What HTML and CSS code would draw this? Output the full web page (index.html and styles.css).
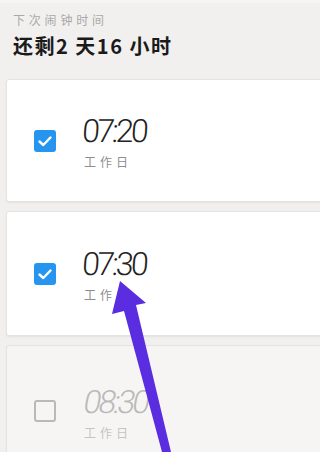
FILE: index.html
```html
<!DOCTYPE html>
<html lang="zh">
<head>
<meta charset="utf-8">
<link rel="stylesheet" href="styles.css">
</head>
<body>
<div class="page">
  <header class="head">
    <div class="label">下次闹钟时间</div>
    <div class="remain">还剩2 天16 小时</div>
  </header>
  <div class="list">
    <div class="card">
      <span class="check on"><svg viewBox="0 0 22 22" width="22" height="22"><path d="M5.5 11.5 L9.3 15 L16.5 7.5" fill="none" stroke="#fff" stroke-width="2.4" stroke-linecap="round" stroke-linejoin="round"/></svg></span>
      <div class="info">
        <div class="time">07:20</div>
        <div class="days">工作日</div>
      </div>
    </div>
    <div class="card">
      <span class="check on"><svg viewBox="0 0 22 22" width="22" height="22"><path d="M5.5 11.5 L9.3 15 L16.5 7.5" fill="none" stroke="#fff" stroke-width="2.4" stroke-linecap="round" stroke-linejoin="round"/></svg></span>
      <div class="info">
        <div class="time">07:30</div>
        <div class="days">工作日</div>
      </div>
    </div>
    <div class="card off">
      <span class="check"></span>
      <div class="info">
        <div class="time">08:30</div>
        <div class="days">工作日</div>
      </div>
    </div>
  </div>
  <svg class="arrow" viewBox="0 0 320 452" width="320" height="452">
    <polygon points="120,281 146,303 136,305 171,452 162,452 124,311 112,314" fill="#5a2ee0"/>
  </svg>
</div>
</body>
</html>
```
FILE: styles.css
```css
html, body {
  margin: 0;
  padding: 0;
  background: #f1f0ef;
  overflow: hidden;
}
.page {
  position: relative;
  width: 320px;
  height: 452px;
  overflow: hidden;
  font-family: "Noto Sans CJK SC", "Noto Sans", sans-serif;
  border-top: 3px solid #f7f5f3;
  box-sizing: border-box;
}
.head {
  padding: 9px 13px 0;
  height: 76px;
  box-sizing: border-box;
}
.label {
  font-size: 12px;
  line-height: 16px;
  letter-spacing: 3.8px;
  color: #a9a9a9;
}
.remain {
  margin-top: 6px;
  font-size: 20px;
  line-height: 24px;
  font-weight: 700;
  letter-spacing: 1.5px;
  color: #1a1a1a;
}
.list {
  display: flex;
  flex-direction: column;
  gap: 9px;
  padding-left: 6px;
  margin-right: -10px;
}
.card {
  display: flex;
  align-items: center;
  gap: 28px;
  height: 121px;
  padding-left: 27px;
  background: #fff;
  border: 1px solid #e4e3e2;
  border-radius: 3px;
  box-shadow: 0 1px 2px rgba(0,0,0,0.06);
}
.card + .card { height: 123px; }
.card.off {
  background: #f6f5f4;
  height: 140px;
}
.check {
  width: 22px;
  height: 22px;
  box-sizing: border-box;
  border-radius: 3px;
  border: 2px solid #b9b9b9;
  flex: none;
  display: block;
}
.check.on {
  background: #2695ef;
  border: none;
}
.check svg { display: block; }
.off .check { margin-top: -10px; }
.info {
  display: flex;
  flex-direction: column;
  padding-top: 2px;
}
.off .info { margin-top: -10px; }
.time {
  margin-left: -3px;
  font-family: "Roboto", sans-serif;
  font-weight: 300;
  font-size: 32px;
  line-height: 34px;
  letter-spacing: -2.8px;
  color: #222;
  transform: skewX(-4deg);
  transform-origin: left bottom;
}
.days {
  margin-top: 7px;
  font-size: 12px;
  line-height: 14px;
  letter-spacing: 4px;
  color: #8e8e8e;
}
.off .time { color: #b9b9b9; transform: skewX(-10deg); }
.off .days { color: #c4c4c4; }
.arrow {
  position: absolute;
  left: 0;
  top: -3px;
}
```
